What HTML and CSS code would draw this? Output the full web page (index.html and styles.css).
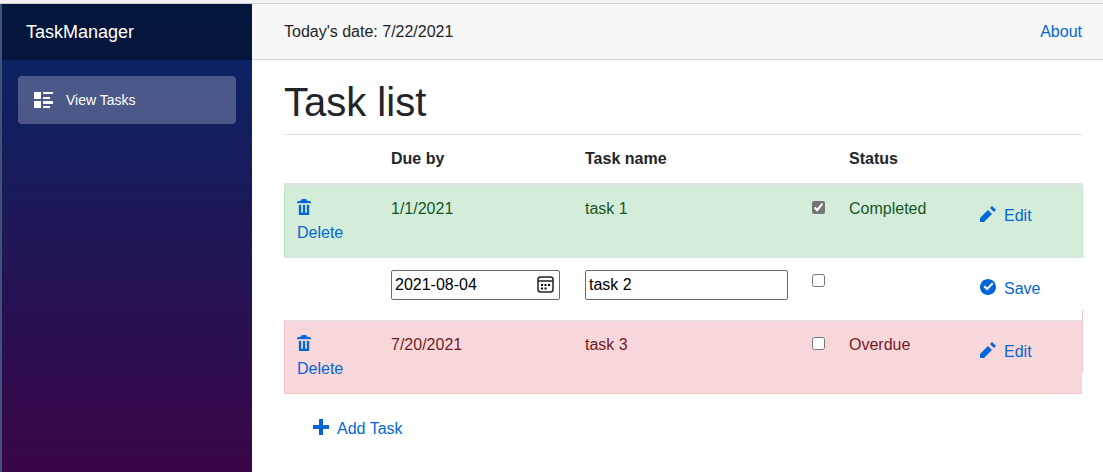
FILE: index.html
```html
<!DOCTYPE html>
<html lang="en">
<head>
<meta charset="utf-8">
<title>TaskManager</title>
<link rel="stylesheet" href="styles.css">
</head>
<body>
<svg class="sprite" aria-hidden="true">
  <symbol id="trash" viewBox="0 0 8 8"><path d="M3 0c-.55 0-1 .45-1 1h-1c-.55 0-1 .45-1 1h7c0-.55-.45-1-1-1h-1c0-.55-.45-1-1-1h-1zm-2 3v4.81c0 .11.08.19.19.19h4.63c.11 0 .19-.08.19-.19v-4.81h-1v3.500c0 .28-.22.5-.5.5s-.5-.22-.5-.5v-3.500h-1v3.500c0 .28-.22.5-.5.5s-.5-.22-.5-.5v-3.500h-1z" stroke="currentColor" stroke-width=".15"/></symbol>
  <symbol id="pencil" viewBox="0 0 8 8"><path d="M6 0l-1 1 2 2 1-1-2-2zm-2 2l-4 4v2h2l4-4-2-2z"/></symbol>
  <symbol id="check" viewBox="0 0 8 8"><path d="M4 0c-2.200 0-4 1.800-4 4s1.800 4 4 4 4-1.800 4-4-1.800-4-4-4zm2 1.780l.72.72-3.220 3.220-1.720-1.720.72-.72 1 1 2.500-2.500z"/></symbol>
  <symbol id="plus" viewBox="0 0 8 8"><path d="M3 0v3h-3v2h3v3h2v-3h3v-2h-3v-3h-2z"/></symbol>
  <symbol id="list" viewBox="0 0 19 16"><path d="M0 0h7v7H0zM0 9h7v7H0zM9 0h10v2H9zM9 5h7v2H9zM9 9h10v3H9zM9 14h7v2H9z"/></symbol>
</svg>
<div class="page">
  <aside class="sidebar">
    <div class="brand-row"><a class="brand" href="#">TaskManager</a></div>
    <nav class="nav">
      <a class="nav-link" href="#"><svg class="nav-icon"><use href="#list"/></svg>View Tasks</a>
    </nav>
  </aside>
  <div class="main">
    <header class="top-row">
      <span>Today's date: 7/22/2021</span>
      <a class="link" href="#">About</a>
    </header>
    <main class="content">
      <h1 class="title">Task list</h1>
      <table class="table">
        <colgroup>
          <col class="col-delete"><col class="col-due"><col class="col-name"><col class="col-done"><col class="col-status"><col>
        </colgroup>
        <thead>
          <tr><th></th><th>Due by</th><th>Task name</th><th></th><th>Status</th><th></th></tr>
        </thead>
        <tbody>
          <tr class="row-success">
            <td><button class="delete link" type="button"><svg class="icon"><use href="#trash"/></svg>Delete</button></td>
            <td>1/1/2021</td>
            <td>task 1</td>
            <td><input class="done" type="checkbox" aria-label="task 1 done" checked></td>
            <td>Completed</td>
            <td><button class="btn link" type="button"><svg class="icon"><use href="#pencil"/></svg>Edit</button></td>
          </tr>
          <tr>
            <td></td>
            <td>
              <div class="field field-date">
                <input class="field-input" type="text" aria-label="Due by" value="2021-08-04">
                <button class="picker" type="button" aria-label="Choose date">
                  <svg class="calendar" viewBox="0 0 18 18">
                    <rect x="1" y="1" width="15" height="15" rx="2.5" fill="none" stroke="#222" stroke-width="1.5"/>
                    <path d="M1 5h15" stroke="#222" stroke-width="1.5"/>
                    <path d="M4 8h2v2h-2zM7.500 8h2v2h-2zM11 8h2v2h-2zM4 11.500h2v2h-2zM7.500 11.500h2v2h-2z" fill="#000"/>
                  </svg>
                </button>
              </div>
            </td>
            <td><div class="field"><input class="field-input" type="text" aria-label="Task name" value="task 2"></div></td>
            <td><input class="done" type="checkbox" aria-label="task 2 done"></td>
            <td></td>
            <td><button class="btn link" type="button"><svg class="icon"><use href="#check"/></svg>Save</button></td>
          </tr>
          <tr class="row-danger">
            <td><button class="delete link" type="button"><svg class="icon"><use href="#trash"/></svg>Delete</button></td>
            <td>7/20/2021</td>
            <td>task 3</td>
            <td><input class="done" type="checkbox" aria-label="task 3 done"></td>
            <td>Overdue</td>
            <td><button class="btn link" type="button"><svg class="icon"><use href="#pencil"/></svg>Edit</button></td>
          </tr>
        </tbody>
      </table>
      <button class="btn link add" type="button"><svg class="icon"><use href="#plus"/></svg>Add Task</button>
    </main>
  </div>
</div>
</body>
</html>
```
FILE: styles.css
```css
* { box-sizing: border-box; }
body {
  margin: 0;
  display: flex;
  flex-direction: column;
  min-height: 100vh;
  border-top: 3px solid #f1f1f1;
  font: 16px/24px "Liberation Sans", Arial, sans-serif;
  color: #212529;
  background: #fff;
}
.sprite { display: none; }
a { text-decoration: none; }
svg { fill: currentColor; }
.page {
  flex: 1;
  display: flex;
  border-top: 1px solid #d0d0d0;
}
.sidebar {
  width: 252px;
  flex: none;
  border-left: 2px solid #41527a;
  background: linear-gradient(180deg, #052767 0%, #3a0647 100%);
}
.brand-row {
  height: 56px;
  display: flex;
  align-items: center;
  padding-left: 24px;
  background: rgba(0, 0, 0, 0.4);
}
.brand { font-size: 18px; color: #fff; }
.nav { padding: 16px; }
.nav-link {
  display: flex;
  align-items: center;
  gap: 13px;
  height: 48px;
  padding: 0 16px;
  border-radius: 4px;
  background: rgba(255, 255, 255, 0.25);
  color: #fff;
  font-size: 14px;
}
.nav-icon { width: 19px; height: 16px; }
.main { flex: 1; min-width: 0; }
.top-row {
  height: 56px;
  display: flex;
  align-items: center;
  justify-content: space-between;
  padding: 0 21px 0 32px;
  background: #f7f7f7;
  border-bottom: 1px solid #d6d5d5;
}
.link { color: #0366d6; }
.content { padding: 18px 21px 0 32px; }
.title {
  margin: 0 0 8px;
  font-size: 40px;
  line-height: 48px;
  font-weight: 400;
}
.table {
  width: 100%;
  margin-bottom: 16px;
  table-layout: fixed;
  border-collapse: separate;
  border-spacing: 0;
  border-top: 1px solid #dee2e6;
}
.col-delete { width: 95px; }
.col-due { width: 194px; }
.col-name { width: 227px; }
.col-done { width: 37px; }
.col-status { width: 118px; }
th, td {
  padding: 12px;
  text-align: left;
  vertical-align: top;
  border-bottom: 1px solid #dee2e6;
}
th { border-bottom-width: 2px; }
.row-success td { background: #d4edda; color: #155724; }
.row-danger td { background: #f8d7da; color: #721c24; border-bottom-color: #f5c6cb; }
.row-success td:first-child { box-shadow: inset 1px 0 #c3e6cb; }
.row-danger td:first-child { box-shadow: inset 1px 0 #f5c6cb; }
.row-success td:last-child, .row-danger td:last-child { position: relative; }
.row-success td:last-child::after, .row-danger td:last-child::after {
  content: "";
  position: absolute;
  top: 0;
  bottom: -1px;
  right: -1px;
  width: 1px;
  background: #c3e6cb;
}
.row-danger td:last-child::after { top: -11px; bottom: 20px; background: #f5c6cb; }
button {
  font: inherit;
  padding: 0;
  border: 0;
  background: none;
  cursor: pointer;
}
.icon { width: 16px; height: 16px; }
.delete {
  display: block;
  padding-left: 1px;
  text-align: left;
}
.delete .icon { display: block; margin: 2px 0 6px; }
.btn { display: block; height: 38px; padding: 0 13px; }
.btn .icon { margin-right: 8px; vertical-align: -1px; }
.add { margin-left: 16px; }
.done { display: block; width: 13px; height: 13px; margin: 4px 0; accent-color: #767676; }
.field {
  display: flex;
  align-items: center;
  height: 30px;
  padding: 0 4px 0 3px;
  border: 1px solid #6b6b6b;
  border-radius: 2px;
  background: #fff;
}
.field-date { margin-right: 1px; }
.field-input {
  flex: 1;
  min-width: 0;
  padding: 0;
  border: 0;
  outline: 0;
  font: inherit;
  color: #000;
  background: none;
}
.picker { display: flex; }
.calendar { width: 18px; height: 18px; }
```
